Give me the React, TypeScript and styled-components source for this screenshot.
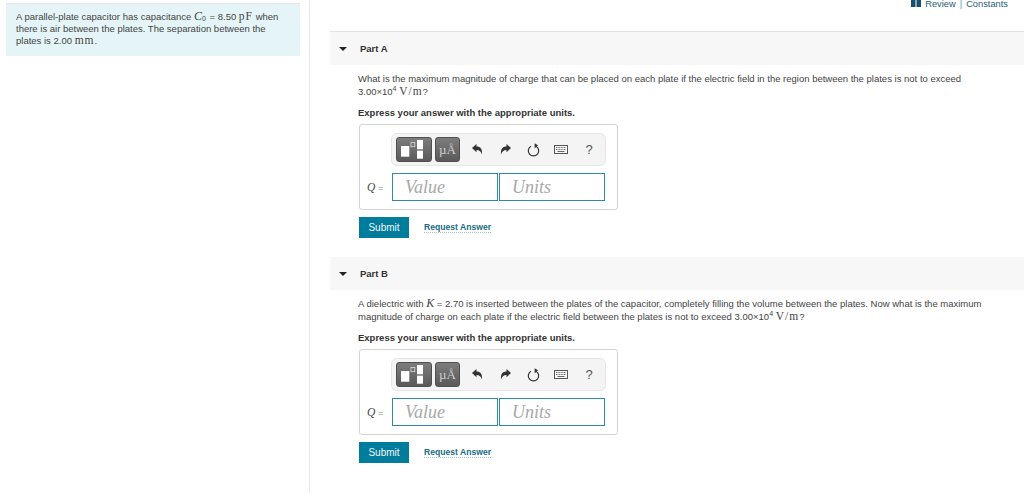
import React from "react";
import styled, { createGlobalStyle } from "styled-components";

const Global = createGlobalStyle`
  html, body { margin: 0; padding: 0; background: #fff; }
  body { font-family: "Liberation Sans", Arial, sans-serif; color: #333; overflow: hidden; }
`;
const Page = styled.div`
  width: 1024px; height: 493px; display: grid; grid-template-columns: 310px 1fr; overflow: hidden;
`;
const Sidebar = styled.aside`
  border-right: 1px solid #e3e8ee; padding: 3px 9px 0 6px; height: 493px; box-sizing: border-box;
`;
const Intro = styled.div`
  height: 53px; box-sizing: border-box; background: #e5f5f7; border-top: 1px solid #e4e8e8;
  padding: 7px 10px 0 10px; font-size: 9.5px; line-height: 12px; color: #444;
`;
const Main = styled.main`
  padding-left: 20px; display: flex; flex-direction: column;
`;
const TopLinks = styled.div`
  height: 32px; box-sizing: border-box; border-bottom: 1px solid #e2e2e2; display: flex; justify-content: flex-end;
  align-items: flex-start; gap: 4px; padding-right: 16px; font-size: 9.3px; line-height: 8px; color: #28607a;
`;
const BookIcon = styled.svg`
  width: 10px; height: 7px; flex: none; display: block;
`;
const Divider = styled.span`
  color: #4a9ac0;
`;
const Part = styled.section`
  display: flex; flex-direction: column;
`;
const PartHeader = styled.header`
  height: 33px; background: #f7f7f7; display: flex; align-items: center; gap: 13px; padding-left: 9px;
  font-size: 9.5px; font-weight: bold; color: #333;
`;
const Caret = styled.span`
  width: 0; height: 0; border-left: 4px solid transparent; border-right: 4px solid transparent; border-top: 4.5px solid #222;
`;
const PartBody = styled.div`
  padding: 7px 0 19px 28px; display: flex; flex-direction: column;
`;
const Question = styled.p<{ $w: number }>`
  margin: 0; width: ${p => p.$w}px; font-size: 9.5px; line-height: 13px; color: #444;
`;
const Hint = styled.p`
  margin: 9px 0 5px; font-size: 9.5px; line-height: 12px; font-weight: bold; color: #333;
`;
const Answer = styled.div`
  width: 259px; height: 86px; box-sizing: border-box; border: 1px solid #d4d4d4; border-radius: 3px; margin-left: 1px;
  padding: 8px 11px 0 31px; display: flex; flex-direction: column; gap: 7px;
`;
const Toolbar = styled.div`
  height: 33px; width: 215px; box-sizing: border-box; background: #f4f4f4; border: 1px solid #e6e6e6; border-radius: 6px;
  display: flex; align-items: center; padding-left: 4px;
`;
const DarkButton = styled.div<{ $w: number }>`
  width: ${p => p.$w}px; height: 25px; box-sizing: border-box; border-radius: 3px; margin-right: 3px;
  background: linear-gradient(#7d7d7d, #595959); border: 1px solid #4f4f4f; display: flex; align-items: center; justify-content: center;
  color: #d0d0d0; font-family: "Liberation Serif", serif; font-size: 13px; flex: none;
`;
const ToolIcon = styled.svg`
  display: block; flex: none;
`;
const IconSlot = styled.div`
  width: 28px; display: flex; justify-content: center; align-items: center; flex: none; color: #555; font-size: 13px;
`;
const Row = styled.div`
  display: flex; align-items: center; margin-left: -24px;
`;
const VarLabel = styled.div`
  width: 25px; flex: none; font-family: "Liberation Serif", serif; font-size: 11px; color: #444; white-space: nowrap;
  i { font-size: 11.5px; } span { color: #888; font-size: 9px; font-family: "Liberation Sans", sans-serif; }
`;
const Field = styled.div<{ $w: number; $pad: number }>`
  width: ${p => p.$w}px; height: 28px; box-sizing: border-box; border: 1px solid #2f8ba5; margin-right: 1px;
  padding-left: ${p => p.$pad}px; display: flex; align-items: center; font-family: "Liberation Serif", serif;
  font-style: italic; font-size: 18px; color: #a8a8a8; flex: none;
`;
const Actions = styled.div`
  display: flex; align-items: center; margin: 7px 0 0 1px; gap: 15px;
`;
const Submit = styled.div`
  width: 50px; height: 21px; background: #007c9c; color: #f0f6f8; font-size: 10px; display: flex; align-items: center; justify-content: center;
`;
const RequestLink = styled.div`
  font-size: 8.6px; font-weight: bold; color: #1a6a84; border-bottom: 1px dotted #9cc4d0; line-height: 9px;
`;
const Var = styled.i`
  font-family: "Liberation Serif", serif; font-size: 12px; line-height: 0;
`;
const Unit = styled.span`
  font-family: "Liberation Serif", serif; font-size: 11.5px; letter-spacing: 1px; line-height: 0;
`;
const Sup = styled.sup`
  font-size: 7px; line-height: 0;
`;
const Sub = styled.sub`
  font-size: 7px; line-height: 0; padding-right: 1px; vertical-align: -1px;
`;

const AnswerBox = () => (
  <Answer>
    <Toolbar>
      <DarkButton $w={36}>
        <ToolIcon width="34" height="23" viewBox="0 0 34 23">
          <rect x="4" y="8" width="8.3" height="10.7" fill="#fff" />
          <rect x="14" y="4.5" width="3.8" height="4.2" fill="none" stroke="#ddd" strokeWidth="0.8" />
          <rect x="20" y="2" width="6" height="9" fill="#fff" />
          <rect x="20" y="11.5" width="6" height=".7" fill="#bbb" />
          <rect x="20" y="12.7" width="6" height="8" fill="#fff" />
        </ToolIcon>
      </DarkButton>
      <DarkButton $w={25}>µÅ</DarkButton>
      <IconSlot>
        <ToolIcon width="11" height="11" viewBox="0 0 11 11"><path d="M0 4 L4.5 0 V2.5 C8.5 2.5 10.5 5 10 10.5 C9 7.5 7.5 6 4.5 6 V8.2 Z" fill="#333" /></ToolIcon>
      </IconSlot>
      <IconSlot>
        <ToolIcon width="11" height="11" viewBox="0 0 11 11"><path d="M11 4 L6.5 0 V2.5 C2.5 2.5 .5 5 1 10.5 C2 7.5 3.5 6 6.5 6 V8.2 Z" fill="#333" /></ToolIcon>
      </IconSlot>
      <IconSlot>
        <ToolIcon width="13" height="14" viewBox="0 0 13 14"><path d="M4 3.2 A5.2 5.2 0 1 0 9 3.2" fill="none" stroke="#333" strokeWidth="1.2" /><path d="M7.6 0.3 L7.6 5.4 L11 2.2 Z" fill="#333" /></ToolIcon>
      </IconSlot>
      <IconSlot>
        <ToolIcon width="14" height="9" viewBox="0 0 14 9">
          <rect x=".5" y=".5" width="13" height="8" fill="#fafafa" stroke="#555" />
          <path d="M2 2.5H12M2 4.5H12" stroke="#666" strokeDasharray="1 .6" /><path d="M3.5 6.5H10.5" stroke="#666" />
        </ToolIcon>
      </IconSlot>
      <IconSlot>?</IconSlot>
    </Toolbar>
    <Row>
      <VarLabel><i>Q</i> <span>=</span></VarLabel>
      <Field $w={106} $pad={12}>Value</Field>
      <Field $w={106} $pad={12}>Units</Field>
    </Row>
  </Answer>
);

const Footer = () => (
  <Actions>
    <Submit>Submit</Submit>
    <RequestLink>Request Answer</RequestLink>
  </Actions>
);

export default function App() {
  return (
    <Page>
      <Global />
      <Sidebar>
        <Intro>
          A parallel-plate capacitor has capacitance <Var>C</Var><Sub>0</Sub> = 8.50 <Unit>pF</Unit> when there is air between the plates. The separation between the plates is 2.00 <Unit>mm</Unit>.
        </Intro>
      </Sidebar>
      <Main>
        <TopLinks>
          <BookIcon viewBox="0 0 10 7"><rect width="4.5" height="7" fill="#14506e" /><rect x="5.5" width="4.5" height="7" fill="#14506e" /></BookIcon>
          <span>Review</span><Divider>|</Divider><span>Constants</span>
        </TopLinks>
        <Part>
          <PartHeader><Caret />Part A</PartHeader>
          <PartBody>
            <Question $w={628}>
              What is the maximum magnitude of charge that can be placed on each plate if the electric field in the region between the plates is not to exceed 3.00×10<Sup>4</Sup> <Unit>V/m</Unit>?
            </Question>
            <Hint>Express your answer with the appropriate units.</Hint>
            <AnswerBox />
            <Footer />
          </PartBody>
        </Part>
        <Part>
          <PartHeader><Caret />Part B</PartHeader>
          <PartBody>
            <Question $w={640}>
              A dielectric with <Var>K</Var> = 2.70 is inserted between the plates of the capacitor, completely filling the volume between the plates. Now what is the maximum magnitude of charge on each plate if the electric field between the plates is not to exceed 3.00×10<Sup>4</Sup> <Unit>V/m</Unit>?
            </Question>
            <Hint>Express your answer with the appropriate units.</Hint>
            <AnswerBox />
            <Footer />
          </PartBody>
        </Part>
      </Main>
    </Page>
  );
}
